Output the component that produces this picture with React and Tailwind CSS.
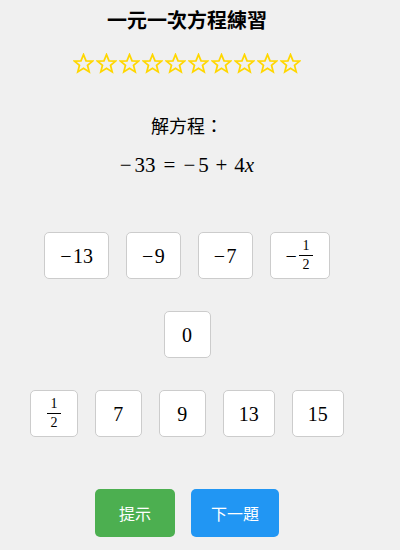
import React from "react";

const mathFont = { fontFamily: '"Liberation Serif", "Times New Roman", serif' };

const Minus = () => <span className="inline-block w-[0.64em] text-left">−</span>;

const Frac = ({ num, den }) => (
  <span className="inline-flex flex-col items-center align-middle text-[0.7em] leading-none mx-[0.05em]">
    <span>{num}</span>
    <span className="block w-[1em] h-px bg-black my-[2px]" />
    <span>{den}</span>
  </span>
);

const Star = () => (
  <svg width="21" height="21" viewBox="0 0 24 24" className="mx-[1px]">
    <polygon
      points="12,1.8 14.9,8.9 22.4,9.3 16.6,14.1 18.5,21.6 12,17.4 5.5,21.6 7.4,14.1 1.6,9.3 9.1,8.9"
      fill="none"
      stroke="#FFD700"
      strokeWidth="2"
      strokeLinejoin="miter"
    />
  </svg>
);

const answers1 = [
  { key: "-13", node: <><Minus />13</> },
  { key: "-9", node: <><Minus />9</> },
  { key: "-7", node: <><Minus />7</> },
  { key: "-1/2", node: <><Minus /><Frac num="1" den="2" /></> },
];
const answers2 = [{ key: "0", node: <>0</> }];
const answers3 = [
  { key: "1/2", node: <Frac num="1" den="2" /> },
  { key: "7", node: <>7</> },
  { key: "9", node: <>9</> },
  { key: "13", node: <>13</> },
  { key: "15", node: <>15</> },
];

const AnswerRow = ({ items, className }) => (
  <div className={`flex justify-center gap-[17px] ${className}`}>
    {items.map((a) => (
      <button
        key={a.key}
        className="h-[47px] min-w-[47px] px-[15px] flex items-center justify-center bg-white border border-[#cccccc] rounded-[5px] text-[20px] text-black"
        style={mathFont}
      >
        {a.node}
      </button>
    ))}
  </div>
);

export default function App() {
  return (
    <div
      className="min-h-screen w-full bg-[#f0f0f0] text-black"
      style={{ fontFamily: '"Noto Sans CJK TC", "Noto Sans", sans-serif' }}
    >
      <div className="w-[374px] flex flex-col items-center">
        <h1 className="h-[40px] flex items-center text-[20px] font-bold">一元一次方程練習</h1>

        {/* 星星 */}
        <div className="h-[46px] flex items-center">
          {Array.from({ length: 10 }).map((_, i) => (
            <Star key={i} />
          ))}
        </div>

        <div className="mt-[24px] h-[30px] flex items-center text-[18px]">解方程：</div>

        <div className="mt-[11px] h-[30px] flex items-center text-[21px]" style={mathFont}>
          <span className="inline-block w-[0.7em] text-left">−</span>33
          <span className="inline-block w-[0.778em] mx-[0.278em] text-center">=</span>
          <span className="inline-block w-[0.7em] text-left">−</span>5
          <span className="inline-block w-[0.778em] mx-[0.222em] text-center">+</span>
          4<span className="italic">x</span>
        </div>

        <AnswerRow items={answers1} className="mt-[51px]" />
        <AnswerRow items={answers2} className="mt-[32px]" />
        <AnswerRow items={answers3} className="mt-[32px]" />

        <div className="mt-[52px] flex gap-4">
          <button className="h-12 min-w-[80px] px-5 rounded-[5px] bg-[#4CAF50] text-white text-[16px]">提示</button>
          <button className="h-12 min-w-[80px] px-5 rounded-[5px] bg-[#2196F3] text-white text-[16px]">下一題</button>
        </div>
      </div>
    </div>
  );
}
